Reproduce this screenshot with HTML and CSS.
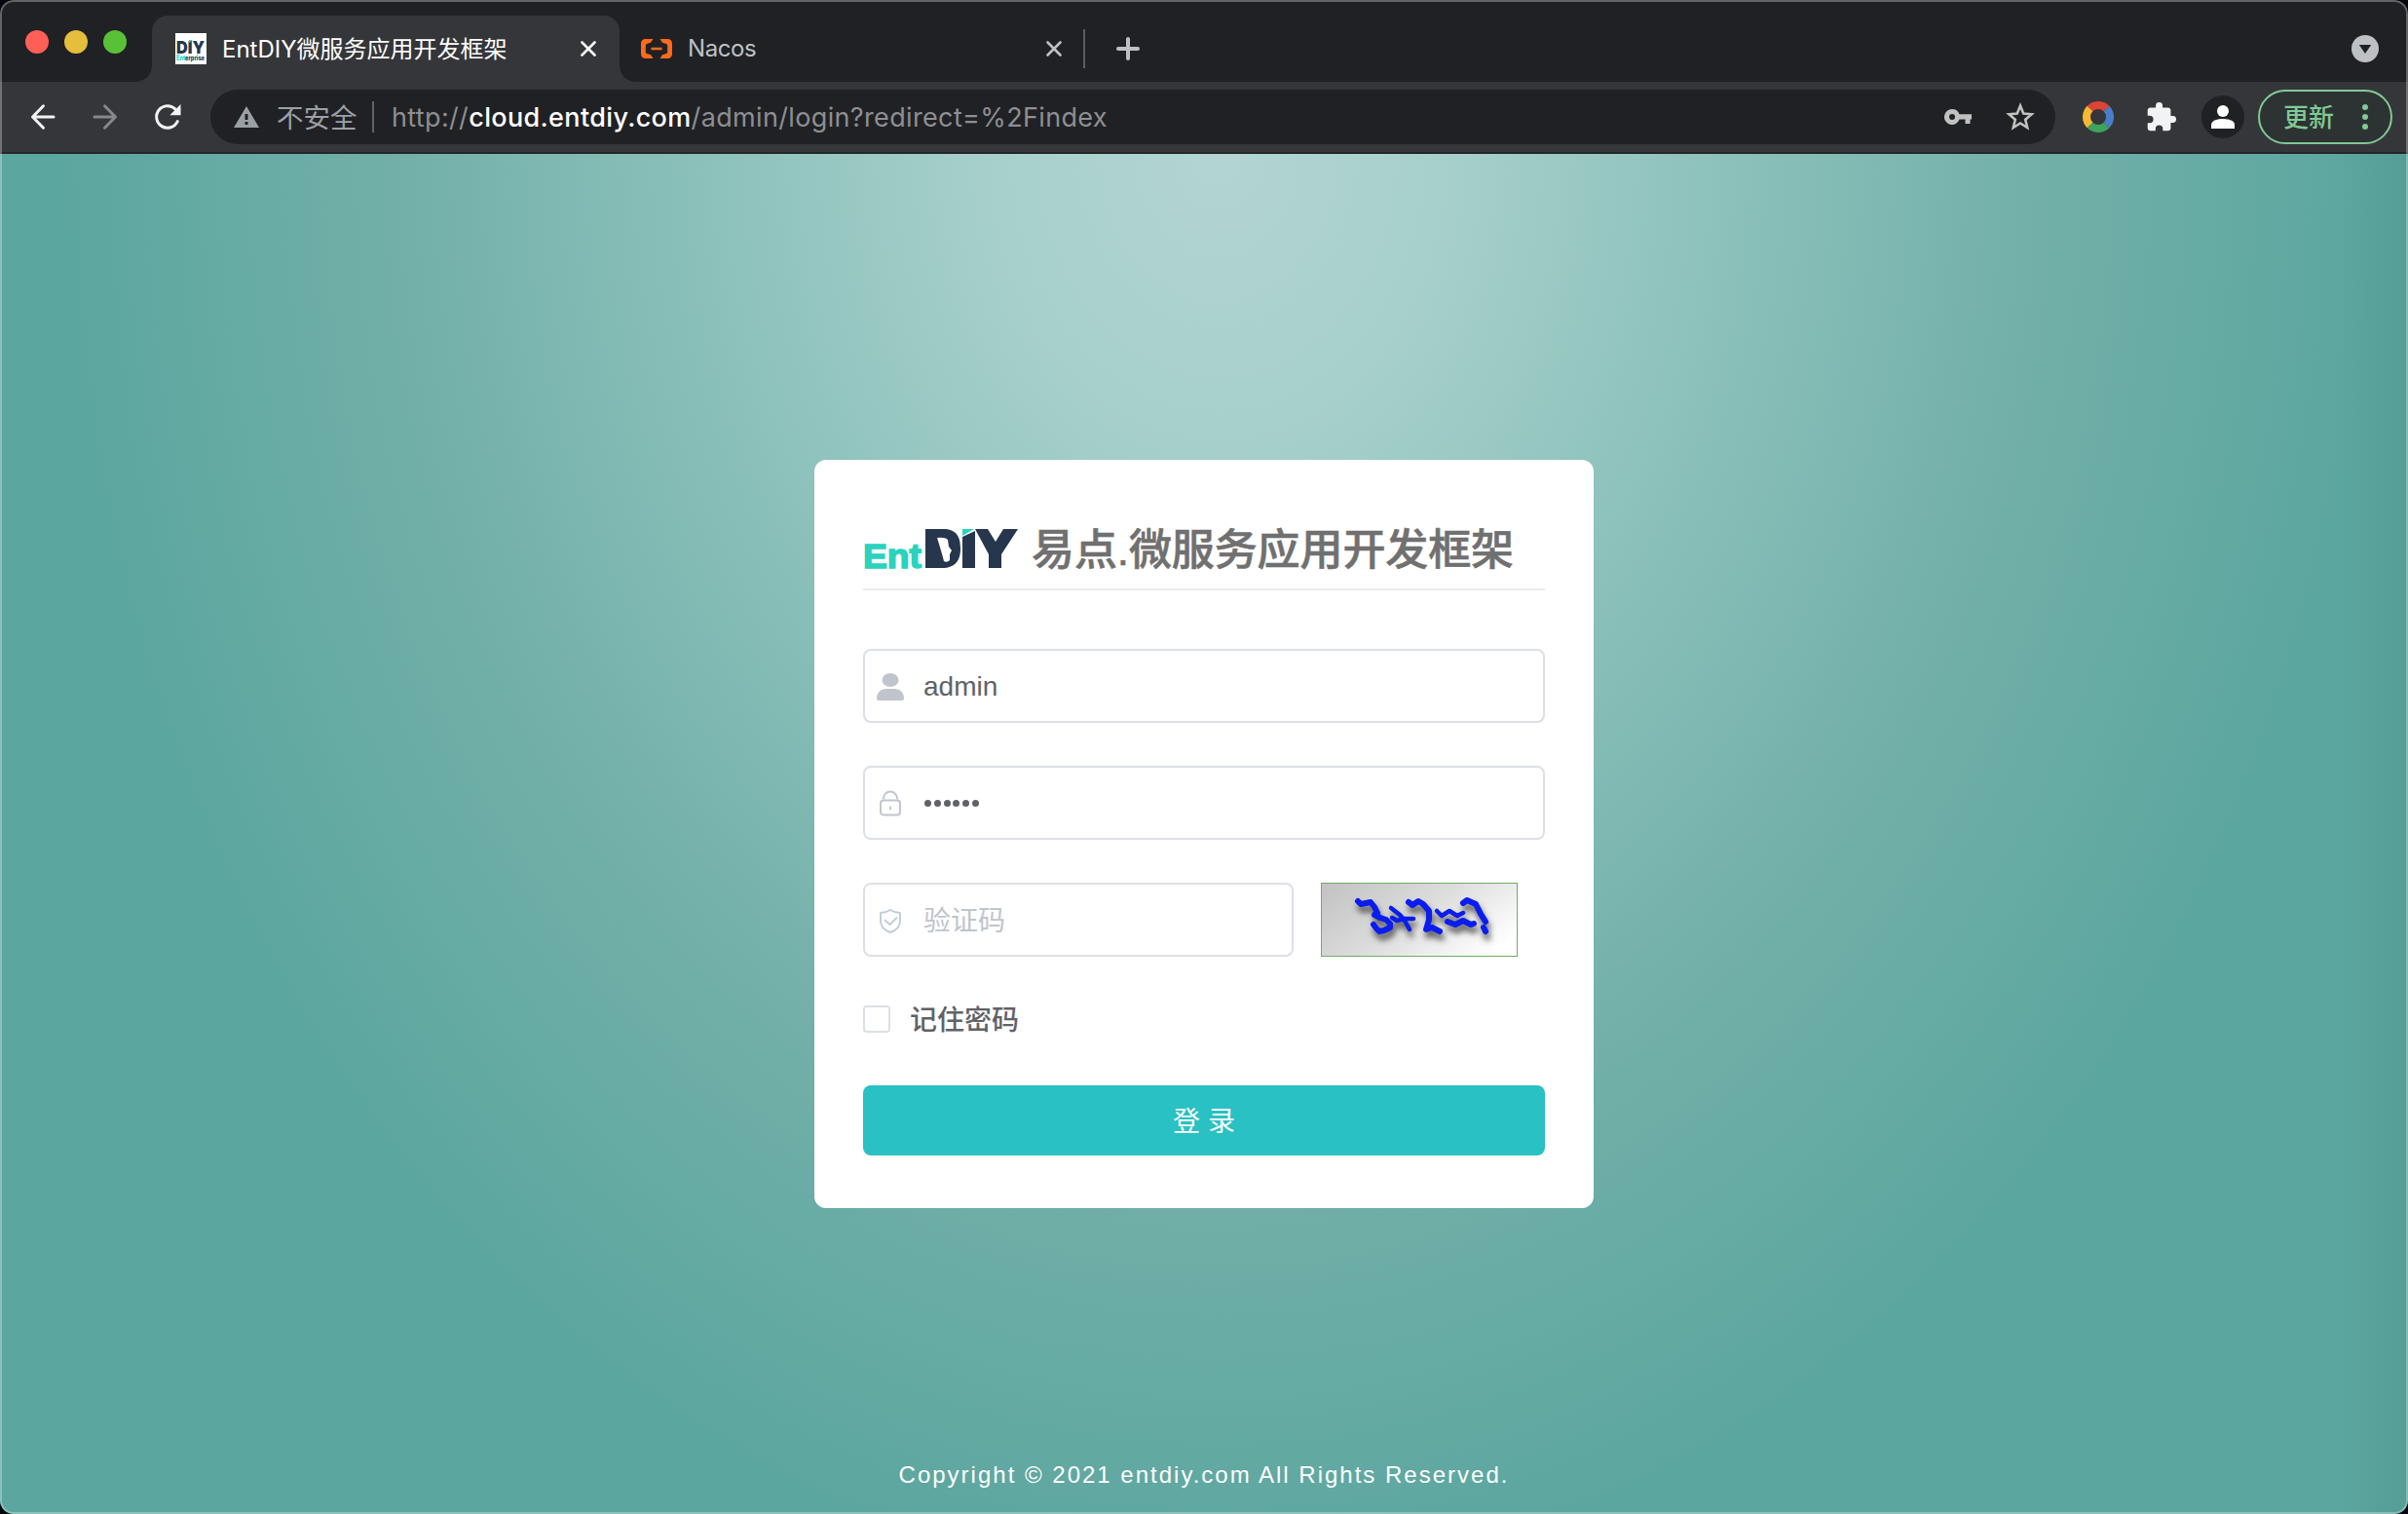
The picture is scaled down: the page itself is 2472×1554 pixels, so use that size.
FILE: index.html
```html
<!DOCTYPE html>
<html lang="zh-CN">
<head>
<meta charset="utf-8">
<title>EntDIY微服务应用开发框架</title>
<link rel="stylesheet" href="styles.css">
</head>
<body>
<div class="window">
  <header class="tabstrip">
    <div class="lights"><i class="light red"></i><i class="light yellow"></i><i class="light green"></i></div>
    <div class="tab active">
      <svg class="favicon" viewBox="0 0 32 32"><rect width="32" height="32" fill="#fff"/><text x="1" y="21" class="fav-diy" textLength="29" lengthAdjust="spacingAndGlyphs">DIY</text><path d="M14 7h4l-4 3z" fill="#29d3bd"/><text x="1" y="28" class="fav-sub" textLength="29" lengthAdjust="spacingAndGlyphs"><tspan fill="#29d3bd">Ent</tspan>erprise</text></svg>
      <span class="tab-title">EntDIY微服务应用开发框架</span>
      <svg class="close" viewBox="0 0 16 16"><path d="M1.500 1.500l13 13M14.500 1.500l-13 13"/></svg>
    </div>
    <div class="tab idle">
      <svg class="nacos" viewBox="0 0 32 20"><path d="M12.500 0H5Q0 0 0 5v10q0 5 5 5h7.500L10 16.300 6 15Q4.800 14.600 4.800 13.200V6.800Q4.800 5.400 6 5l4-1.300zM19.500 0H27q5 0 5 5v10q0 5-5 5h-7.500l2.500-3.700 4-1.300q1.200-.4 1.200-1.800V6.800q0-1.400-1.200-1.800l-4-1.300zM10.500 8.700h11v2.600h-11z" fill="#ff6a1c"/></svg>
      <span class="tab-title">Nacos</span>
      <svg class="close" viewBox="0 0 16 16"><path d="M1.500 1.500l13 13M14.500 1.500l-13 13"/></svg>
    </div>
    <i class="tab-divider"></i>
    <svg class="plus" viewBox="0 0 24 24"><path d="M12 2v20M2 12h20"/></svg>
    <svg class="tab-menu" viewBox="0 0 28 28"><circle cx="14" cy="14" r="14" fill="#bdc1c6"/><path d="M7.800 10h12.400L14 19z" fill="#202124"/></svg>
  </header>
  <nav class="toolbar">
    <svg class="nav-icon" viewBox="0 0 32 32"><path d="M27 16H6M16.500 4.800L5.500 16l11 11.200"/></svg>
    <svg class="nav-icon dim" viewBox="0 0 32 32"><path d="M5 16h21M15.500 4.800l11 11.200-11 11.200"/></svg>
    <svg class="nav-icon" viewBox="0 0 32 32"><path d="M26.300 20.500A11.300 11.300 0 1 1 24 8"/><path d="M29.500 3v11.200H18.300z" class="solid"/></svg>
    <div class="omnibox">
      <svg class="warn" viewBox="0 0 26 22"><path d="M13 0l13 22H0zM11.500 8v6h3V8zM11.500 16v3h3v-3z" fill="#9aa0a6" fill-rule="evenodd"/></svg>
      <span class="insecure">不安全</span>
      <i class="omni-divider"></i>
      <span class="url">http://<b>cloud.entdiy.com</b>/admin/login?redirect=%2Findex</span>
      <svg class="key" viewBox="0 0 28 16"><path d="M8 0a8 8 0 0 1 7.500 5.300H28v5.300h-1.500V15h-5v-4.400h-6A8 8 0 1 1 8 0zm0 5a3 3 0 1 0 0 6 3 3 0 0 0 0-6z" fill="#c1c1c1" fill-rule="evenodd"/></svg>
      <svg class="star" viewBox="0 0 30 30"><path d="M15 3.500l3.200 8 8.400.7-6.400 5.500 2 8.300-7.200-4.500L7.800 26l2-8.300-6.400-5.500 8.400-.7z"/></svg>
    </div>
    <svg class="ring" viewBox="0 0 32 32"><g fill="none" stroke-width="8"><path d="M7.500 7.500A12 12 0 0 1 24.500 7.500" stroke="#dd4437"/><path d="M24.500 7.500A12 12 0 0 1 24.500 24.500" stroke="#4a7ec9"/><path d="M24.500 24.500A12 12 0 0 1 7.500 24.500" stroke="#3fa35c"/><path d="M7.500 24.500A12 12 0 0 1 7.500 7.500" stroke="#f3ba32"/></g></svg>
    <svg class="puzzle" viewBox="1.500 1 21.500 21.500"><path d="M20.500 11H19V7c0-1.100-.9-2-2-2h-4V3.500a2.500 2.500 0 0 0-5 0V5H4c-1.100 0-2 .9-2 2v3.800h1.500a2.700 2.700 0 0 1 0 5.400H2V20c0 1.100.9 2 2 2h3.800v-1.500a2.700 2.700 0 0 1 5.400 0V22H17c1.100 0 2-.9 2-2v-4h1.500a2.500 2.500 0 0 0 0-5z" fill="#f1f3f4"/></svg>
    <svg class="avatar" viewBox="0 0 44 44"><circle cx="22" cy="22" r="22" fill="#202124"/><circle cx="22" cy="16" r="6" fill="#fff"/><path d="M10 34v-4c0-4.500 7-6 12-6s12 1.500 12 6v4z" fill="#fff"/></svg>
    <div class="update"><span>更新</span><svg class="dots" viewBox="0 0 6 26"><circle cx="3" cy="3" r="3"/><circle cx="3" cy="13" r="3"/><circle cx="3" cy="23" r="3"/></svg></div>
  </nav>
  <main class="page">
    <section class="card">
      <h1 class="brand">
        <svg class="logo" viewBox="0 0 160 44"><text x="0" y="41" class="logo-ent" textLength="60" lengthAdjust="spacingAndGlyphs">Ent</text><path fill="#26364d" fill-rule="evenodd" d="M64 1h18C96 1 100 9 100 21S95 41 81 41H64zM76 10q8-1 11 2l1 7 3 4-2 4v6q-3 3-6 1-2-8-7-24zM102 9l13-6v38h-13zM115 1h13l8 13 8-13h15l-17 26v14h-13V27z"/><path d="M102 1h12l-12 7z" fill="#29d3bd"/></svg>
        <span class="brand-name">易点.微服务应用开发框架</span>
      </h1>
      <div class="field">
        <svg class="field-icon" viewBox="0 0 28 28"><ellipse cx="14" cy="7" rx="8.500" ry="7" fill="#c0c4cc"/><path d="M0 26c0-6 4-10 10-10h8c6 0 10 4 10 10q0 2-2 2H2q-2 0-2-2z" fill="#c0c4cc"/></svg>
        <span>admin</span>
      </div>
      <div class="field">
        <svg class="field-icon line" viewBox="0 0 28 28"><rect x="4" y="10.500" width="20" height="15" rx="3"/><path d="M7 8.500a7 7 0 0 1 14 0M14 17.500v2"/></svg>
        <span class="secret"><i></i><i></i><i></i><i></i><i></i><i></i></span>
      </div>
      <div class="row">
        <div class="field short">
          <svg class="field-icon line cool" viewBox="0 0 28 28"><path d="M14 3c3 2 6 3 10 3v8c0 6-4 10-10 12C8 24 4 20 4 14V6c4 0 7-1 10-3zM8.500 13.500l5 4.500 7-7"/></svg>
          <span class="placeholder">验证码</span>
        </div>
        <svg class="captcha" viewBox="0 0 202 76">
          <defs>
            <linearGradient id="paper" x1="0" y1=".2" x2="1" y2=".7"><stop offset="0" stop-color="#c6c5c6"/><stop offset=".5" stop-color="#dedede"/><stop offset="1" stop-color="#fff"/></linearGradient>
            <filter id="soft" x="-20%" y="-40%" width="140%" height="200%"><feGaussianBlur stdDeviation="3"/></filter>
            <g id="ink">
              <path d="M38 19l3 3 10-2 4 5 3 6M55 33l6 3 6 2 4 4 0 4-6 3-5 1-3-3-3-4"/>
              <path class="fine" d="M72 26l9 7 5 6 5 9M73 36l5 3 7-2 10 0"/>
              <path d="M90 20l4 3 6-4 5 3 6 7 0 9-3 10 6-2 8 4M130 40l8 3 8-4 8 4 3-1M146 21l4-3 9 4 5 10 5 8"/>
              <path class="fine" d="M119 29l5 5 8-5 8 5 6-3"/>
              <path d="M167 46l2 4"/>
            </g>
          </defs>
          <rect x=".5" y=".5" width="201" height="75" fill="url(#paper)" stroke="#6fae62"/>
          <use href="#ink" class="ink-shadow" filter="url(#soft)" transform="translate(2 6)"/>
          <use href="#ink" class="ink"/>
        </svg>
      </div>
      <label class="remember"><i class="checkbox"></i><span>记住密码</span></label>
      <button class="login">登 录</button>
    </section>
    <footer class="copyright">Copyright © 2021 entdiy.com All Rights Reserved.</footer>
  </main>
</div>
</body>
</html>
```
FILE: styles.css
```css
* { box-sizing: border-box; }
body { margin: 0; background: #05070f; font-family: Inter, "Noto Sans CJK SC", sans-serif; }
svg, i { display: block; flex: none; }
.window { position: relative; display: flex; flex-direction: column; width: 2472px; height: 1554px; border-radius: 14px; overflow: hidden; background: #202124; }
.window::after { content: ""; position: absolute; inset: 0; border: 2px solid rgba(255,255,255,.3); border-radius: 14px; pointer-events: none; }
.tabstrip { display: flex; height: 84px; padding: 16px 30px 0 26px; align-items: center; }
.lights { display: flex; gap: 16px; width: 130px; margin-top: -14px; }
.light { width: 24px; height: 24px; border-radius: 50%; }
.red { background: #ff5f57; }
.yellow { background: #e5bf3c; }
.green { background: #59c137; }
.tab { display: flex; align-items: center; height: 68px; font-size: 24px; color: #bdc1c6; }
.active { position: relative; width: 480px; padding: 0 24px; background: #35363a; border-radius: 16px 16px 0 0; color: #fff; }
.active::before, .active::after { content: ""; position: absolute; bottom: 0; width: 16px; height: 16px; }
.active::before { left: -16px; background: radial-gradient(circle at 0 0, transparent 15.500px, #35363a 16px); }
.active::after { right: -16px; background: radial-gradient(circle at 100% 0, transparent 15.500px, #35363a 16px); }
.favicon { width: 32px; height: 32px; margin-right: 16px; overflow: visible; }
.fav-diy { font: 900 18px Inter, sans-serif; fill: #26364d; }
.fav-sub { font: 800 7px Inter, sans-serif; fill: #26364d; }
.tab-title { flex: 1; white-space: nowrap; }
.active .tab-title { padding-bottom: 4px; }
.idle .tab-title { padding-bottom: 1px; letter-spacing: -.4px; }
.close { width: 16px; height: 16px; fill: none; stroke: currentColor; stroke-width: 2.600; stroke-linecap: round; }
.idle { width: 454px; padding-left: 22px; }
.nacos { width: 32px; height: 20px; margin-right: 16px; }
.tab-divider { width: 2px; height: 40px; margin-left: 22px; background: #5b5d61; }
.plus { width: 24px; height: 24px; margin-left: 32px; fill: none; stroke: #bdc1c6; stroke-width: 4; stroke-linecap: round; }
.tab-menu { width: 28px; height: 28px; margin-left: auto; }
.toolbar { display: flex; align-items: center; height: 74px; padding: 0 16px 0 28px; background: #35363a; border-bottom: 2px solid #252629; }
.nav-icon { width: 32px; height: 32px; margin-right: 32px; fill: none; stroke: #f1f3f4; stroke-width: 3; stroke-linecap: round; stroke-linejoin: round; }
.nav-icon.dim { stroke: #86888a; }
.nav-icon .solid { fill: #f1f3f4; stroke: none; }
.omnibox { display: flex; align-items: center; width: 1894px; height: 56px; margin-left: -4px; padding: 0 21px 0 24px; border-radius: 28px; background: #202124; font-size: 27px; }
.warn { width: 26px; height: 22px; }
.insecure { margin-left: 18px; width: 98px; padding-bottom: 3px; color: #9aa0a6; font-size: 27.500px; }
.omni-divider { width: 2px; height: 32px; background: #5f6368; }
.url { flex: 1; margin-left: 18px; color: #8d8f92; white-space: nowrap; letter-spacing: .35px; }
.url b { font-weight: 500; color: #fff; }
.key { width: 28px; height: 16px; margin-right: 35px; }
.star { width: 30px; height: 30px; fill: none; stroke: #c1c1c1; stroke-width: 2.600; }
.ring { width: 32px; height: 32px; margin-left: 28px; }
.puzzle { width: 30px; height: 30px; margin-left: 34px; }
.avatar { width: 44px; height: 44px; margin-left: 26px; }
.update { display: flex; align-items: center; justify-content: space-between; width: 138px; height: 56px; margin-left: 14px; padding: 0 23px 0 24px; border: 2px solid #81c995; border-radius: 28px; background: #2d3333; color: #81c995; font-size: 26px; font-weight: 500; }
.update span { padding-bottom: 3px; }
.dots { width: 6px; height: 26px; fill: #81c995; }
.page { display: flex; flex-direction: column; align-items: center; flex: 1; padding-top: 314px; background: linear-gradient(to right, transparent 2400px, rgba(40,90,85,.12)), radial-gradient(ellipse 1190px 1480px at 1250px 0, #b3d4d3 0%, #a7d0cb 19%, #8bc0ba 45%, #72b0a9 70%, #5ba69f 100%); }
.card { width: 800px; height: 768px; padding: 60px 50px 0; border-radius: 12px; background: #fff; }
.brand { display: flex; align-items: center; height: 74px; margin: 0 0 60px; padding-bottom: 8px; border-bottom: 2px solid #ede8e8; font-size: 44px; font-weight: 500; color: #707070; }
.logo { width: 160px; height: 44px; margin-right: 13px; overflow: visible; }
.logo-ent { font: 700 35px "Liberation Sans", sans-serif; fill: #29d3bd; stroke: #29d3bd; stroke-width: 1.500px; }
.brand-name { margin-top: 2px; font-family: "Liberation Sans", "Noto Sans CJK SC", sans-serif; line-height: 60px; white-space: nowrap; letter-spacing: -.1px; -webkit-text-stroke: .6px #707070; }
.field { display: flex; align-items: center; height: 76px; margin-bottom: 44px; padding: 1px 0 0 12px; border: 2px solid #dcdfe6; border-radius: 8px; color: #606266; font: 28px "Liberation Sans", "Noto Sans CJK SC", sans-serif; }
.field-icon { width: 28px; height: 28px; margin-right: 20px; }
.line { fill: none; stroke: #c0c4cc; stroke-width: 1.900; stroke-linecap: round; stroke-linejoin: round; }
.cool { stroke: #c3cbdc; }
.secret { display: flex; gap: 2.800px; padding: 0 0 1px 1px; }
.secret i { width: 7px; height: 7px; border-radius: 50%; background: #606266; }
.placeholder { padding-bottom: 4px; color: #c0c4cc; }
.row { display: flex; gap: 28px; }
.short { width: 442px; }
.captcha { width: 202px; height: 76px; }
.ink, .ink-shadow { fill: none; stroke: #0a1cf0; stroke-width: 6; stroke-linecap: round; stroke-linejoin: round; }
.ink-shadow { stroke: #555; }
.fine { stroke-width: 4.500; }
.remember { display: flex; align-items: center; height: 40px; margin: 0 0 48px; color: #606266; font-size: 28px; font-weight: 500; }
.remember span { padding-bottom: 3px; }
.checkbox { width: 28px; height: 28px; margin-right: 20px; border: 2px solid #dcdfe6; border-radius: 4px; }
.login { display: block; width: 700px; height: 72px; padding: 0 0 3px; border: 0; border-radius: 8px; background: #29c1c3; color: #fff; font: 28px "Liberation Sans", "Noto Sans CJK SC", sans-serif; }
.copyright { margin: auto 0 26px; color: #fff; font: 24px/28px "Liberation Sans", sans-serif; letter-spacing: 2px; }
```
